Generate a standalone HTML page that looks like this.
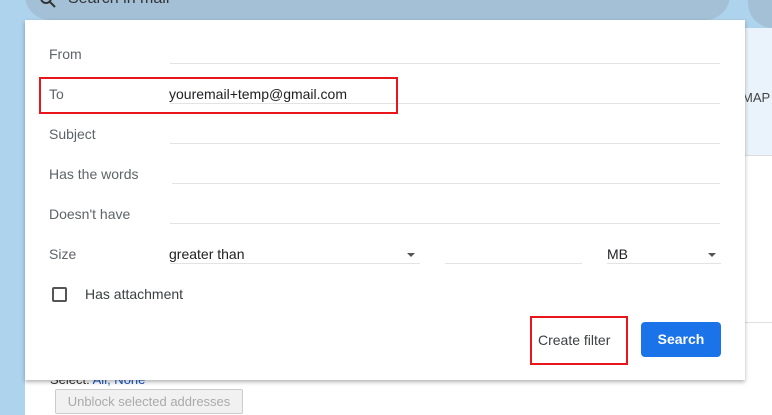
<!DOCTYPE html>
<html><head><style>
body{margin:0;width:772px;height:415px;position:relative;overflow:hidden;background:#fff;font-family:"Liberation Sans",Arial,sans-serif;}
.abs{position:absolute}
.lbl{position:absolute;left:49px;font-size:14px;color:#5f6368}
.ln{position:absolute;height:1px;background:#e3e3e3}
</style></head><body>
<div class="abs" style="left:0;top:0;width:25px;height:415px;background:#aed3ec"></div>
<div class="abs" style="left:25px;top:0;width:747px;height:30px;background:#aed3ec"></div>
<div class="abs" style="left:25px;top:-30px;width:705px;height:50px;background:#a3c0d6;border-radius:25px"></div>
<div class="abs" style="left:68px;top:-10px;font-size:16px;color:#333">Search in mail</div>
<svg class="abs" style="left:40px;top:-8px" width="16" height="16" viewBox="0 0 16 16"><circle cx="6" cy="6" r="5" fill="none" stroke="#333" stroke-width="2"/><path d="M10 10 L15 15" stroke="#333" stroke-width="2"/></svg>
<div class="abs" style="left:748px;top:-30px;width:60px;height:58px;background:#a3c0d6;border-radius:25px"></div>
<div class="abs" style="left:745px;top:28px;width:27px;height:128px;background:#eaf3fb"></div>
<div class="abs" style="left:745px;top:155px;width:27px;height:1px;background:#dadce0"></div>
<div class="abs" style="left:742px;top:90px;font-size:13px;color:#444">MAP</div>
<div class="abs" style="left:745px;top:322px;width:27px;height:1px;background:#e0e0e0"></div>
<div class="abs" style="left:50px;top:372px;font-size:13px;color:#333">Select: <span style="color:#15c">All, None</span></div>
<div class="abs" style="left:55px;top:389px;width:186px;height:23px;border:1px solid #ccc;background:#f1f1f1;border-radius:2px;color:#aaa;font-size:13px;line-height:23px;text-align:center">Unblock selected addresses</div>
<div class="abs" style="left:25px;top:20px;width:720px;height:360px;background:#fff;box-shadow:0 2px 4px rgba(0,0,0,.3)"></div>
<div class="lbl" style="top:46px">From</div><div class="ln" style="left:170px;top:63px;width:550px"></div>
<div class="lbl" style="top:86px">To</div><div class="ln" style="left:170px;top:103px;width:550px"></div>
<div class="abs" style="left:169px;top:86px;font-size:14px;color:#202124">youremail+temp@gmail.com</div>
<div class="abs" style="left:39px;top:77px;width:355px;height:33px;border:2px solid #e8151b"></div>
<div class="lbl" style="top:126px">Subject</div><div class="ln" style="left:170px;top:143px;width:550px"></div>
<div class="lbl" style="top:166px">Has the words</div><div class="ln" style="left:172px;top:183px;width:548px"></div>
<div class="lbl" style="top:206px">Doesn't have</div><div class="ln" style="left:170px;top:223px;width:550px"></div>
<div class="lbl" style="top:246px">Size</div>
<div class="abs" style="left:169px;top:246px;font-size:14px;color:#202124">greater than</div>
<div class="abs" style="left:407px;top:253px;border-left:4px solid transparent;border-right:4px solid transparent;border-top:4px solid #555"></div>
<div class="ln" style="left:170px;top:263px;width:250px"></div>
<div class="ln" style="left:445px;top:263px;width:137px"></div>
<div class="abs" style="left:607px;top:246px;font-size:14px;color:#202124">MB</div>
<div class="abs" style="left:708px;top:253px;border-left:4px solid transparent;border-right:4px solid transparent;border-top:4px solid #555"></div>
<div class="ln" style="left:607px;top:263px;width:114px"></div>
<div class="abs" style="left:52px;top:287px;width:11px;height:11px;border:2px solid #555;border-radius:2px"></div>
<div class="lbl" style="left:85px;top:286px;color:#3c4043">Has attachment</div>
<div class="abs" style="left:530px;top:316px;width:94px;height:45px;border:2px solid #e8151b"></div>
<div class="abs" style="left:538px;top:332px;font-size:14px;color:#3c4043">Create filter</div>
<div class="abs" style="left:641px;top:322px;width:80px;height:35px;background:#1a73e8;border-radius:4px;color:#fff;font-size:14px;font-weight:bold;line-height:35px;text-align:center">Search</div>
</body></html>
